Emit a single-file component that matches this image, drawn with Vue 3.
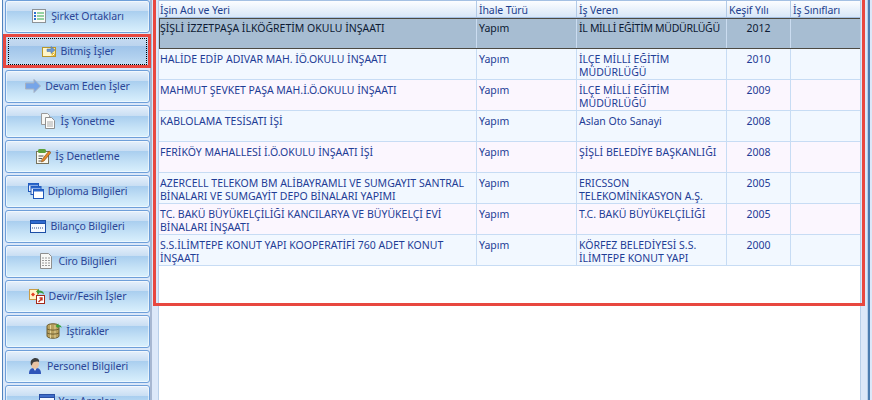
<script setup>
const menu = [
  { key: 'sirket', label: 'Şirket Ortakları' },
  { key: 'bitmis', label: 'Bitmiş İşler', active: true },
  { key: 'devam', label: 'Devam Eden İşler' },
  { key: 'yonetme', label: 'İş Yönetme' },
  { key: 'denetleme', label: 'İş Denetleme' },
  { key: 'diploma', label: 'Diploma Bilgileri' },
  { key: 'bilanco', label: 'Bilanço Bilgileri' },
  { key: 'ciro', label: 'Ciro Bilgileri' },
  { key: 'devir', label: 'Devir/Fesih İşler' },
  { key: 'istirak', label: 'İştirakler' },
  { key: 'personel', label: 'Personel Bilgileri' },
  { key: 'yazi', label: 'Yazı Araçları' },
]
const headers = ['İşin Adı ve Yeri', 'İhale Türü', 'İş Veren', 'Keşif Yılı', 'İş Sınıfları']
const rows = [
  ['ŞİŞLİ İZZETPAŞA İLKÖĞRETİM OKULU İNŞAATI', 'Yapım', 'İL MİLLİ EĞİTİM MÜDÜRLÜĞÜ', '2012'],
  ['HALİDE EDİP ADIVAR MAH. İÖ.OKULU İNŞAATI', 'Yapım', 'İLÇE MİLLİ EĞİTİM\nMÜDÜRLÜĞÜ', '2010'],
  ['MAHMUT ŞEVKET PAŞA MAH.İ.Ö.OKULU İNŞAATI', 'Yapım', 'İLÇE MİLLİ EĞİTİM\nMÜDÜRLÜĞÜ', '2009'],
  ['KABLOLAMA TESİSATI İŞİ', 'Yapım', 'Aslan Oto Sanayi', '2008'],
  ['FERİKÖY MAHALLESİ İ.Ö.OKULU İNŞAATI İŞİ', 'Yapım', 'ŞİŞLİ BELEDİYE BAŞKANLIĞI', '2008'],
  ['AZERCELL TELEKOM BM ALİBAYRAMLI VE SUMGAYIT SANTRAL\nBİNALARI VE SUMGAYİT DEPO BİNALARI YAPIMI', 'Yapım', 'ERICSSON\nTELEKOMİNİKASYON A.Ş.', '2005'],
  ['TC. BAKÜ BÜYÜKELÇİLİĞİ KANCILARYA VE BÜYÜKELÇİ EVİ\nBİNALARI İNŞAATI', 'Yapım', 'T.C. BAKÜ BÜYÜKELÇİLİĞİ', '2005'],
  ['S.S.İLİMTEPE KONUT YAPI KOOPERATİFİ 760 ADET KONUT\nİNŞAATI', 'Yapım', 'KÖRFEZ BELEDİYESİ S.S.\nİLİMTEPE KONUT YAPI', '2000'],
]
</script>

<template>
  <div class="app">
    <aside class="sidebar">
      <div class="menu">
        <button v-for="m in menu" :key="m.key" class="btn" :class="{ active: m.active }">
          <svg class="ico" width="16" height="16" viewBox="0 0 16 16">
            <template v-if="m.key === 'sirket'">
              <rect x="1.500" y="1.500" width="13" height="13" fill="#fbfbf8" stroke="#8d9296" />
              <rect x="3" y="4" width="2" height="2" fill="#2a6fd0" />
              <rect x="3" y="7" width="2" height="2" fill="#2a6fd0" />
              <rect x="3" y="10" width="2" height="2" fill="#2a6fd0" />
              <path d="M6 5h7M6 8h7M6 11h7" stroke="#2fa84a" />
            </template>
            <template v-else-if="m.key === 'bitmis'">
              <rect x="1.500" y="4.500" width="13" height="9" fill="#fbe88e" stroke="#b8962a" />
              <rect x="2" y="5" width="8" height="8" fill="#fff6c8" />
              <path d="M6 6h4V3.500l4 3.500-4 3.500V8.500H6z" fill="#6d96cf" stroke="#50709e" stroke-width=".5" />
              <rect x="11" y="10" width="3" height="3" fill="#e6b93a" />
              <path d="M11.500 12.500l2-2" stroke="#fff" />
            </template>
            <template v-else-if="m.key === 'devam'">
              <path d="M.5 5h8.500V1.500L15.500 8 9 14.500V11H.5z" fill="#76a5e8" stroke="#a8b1bf" />
            </template>
            <template v-else-if="m.key === 'yonetme'">
              <path d="M1.500 .5h6l2 2v9h-8z" fill="#f7f7f5" stroke="#9a9a9a" />
              <path d="M5.500 4.500h6l3 3v8h-9z" fill="#fdfdfb" stroke="#8f8f8f" />
              <path d="M7 9h6M7 11h6M7 13h6" stroke="#aaa" />
            </template>
            <template v-else-if="m.key === 'denetleme'">
              <rect x="1.500" y="3.500" width="12" height="12" fill="#fbfaf0" stroke="#77735e" />
              <rect x="3" y="1" width="8" height="4" rx="1.500" fill="#5da13a" />
              <path d="M3.500 8h5M3.500 10.500h3.500M3.500 13h3" stroke="#555" />
              <path d="M7 11.500L14 3l2 1.500L9 13l-2.500 1z" fill="#e6892a" stroke="#7b4a14" stroke-width=".6" />
            </template>
            <template v-else-if="m.key === 'diploma'">
              <rect x=".5" y=".5" width="10" height="8" fill="#e8f0fc" stroke="#1e56b8" />
              <rect x=".5" y=".5" width="10" height="2" fill="#2a66cb" />
              <rect x="3" y="3.500" width="10" height="8" fill="#eff5ff" stroke="#1e56b8" />
              <rect x="3" y="3.500" width="10" height="2" fill="#2a66cb" />
              <rect x="5.500" y="6.500" width="10" height="9" fill="#fff" stroke="#1e56b8" />
              <rect x="5.500" y="6.500" width="10" height="2" fill="#2a66cb" />
            </template>
            <template v-else-if="m.key === 'bilanco'">
              <rect x=".5" y="2.500" width="15" height="12" fill="#f7faff" stroke="#1d4fa6" />
              <rect x=".5" y="2.500" width="15" height="3" fill="#2f6ad0" stroke="#1d4fa6" />
              <path d="M2 10h12" stroke="#2e4f8e" stroke-dasharray="1 1" />
            </template>
            <template v-else-if="m.key === 'ciro'">
              <path d="M2.500 .5h8l3 3v12h-11z" fill="#f8f8f6" stroke="#8f8f8f" />
              <path d="M4 5h8M4 7.500h8M4 10h8M4 12.500h8" stroke="#9a9a9a" stroke-dasharray="2 1" />
            </template>
            <template v-else-if="m.key === 'devir'">
              <rect x=".5" y="1.500" width="8" height="10" fill="#fff4c9" stroke="#c99b45" />
              <path d="M2 6.500l2-2 2 2-2 2z" fill="#e43c22" />
              <path d="M7 3.500L10 .8V2.500c3 0 5 1.500 5 4-1-1.500-3-1.800-5-1.800v1.800z" fill="#3c9a3a" />
              <rect x="7.500" y="7.500" width="8" height="8" fill="#fff" stroke="#a32a1a" />
              <path d="M9.500 14l3.500-3.500M10.500 10H13v2.500" stroke="#c8331f" stroke-width="1.400" fill="none" />
            </template>
            <template v-else-if="m.key === 'istirak'">
              <path d="M1 3c0-3 12-3 12 0v10c0 3-12 3-12 0z" fill="#b9a15f" stroke="#6f5f32" />
              <path d="M4.500 2v13M9 2v13" stroke="#e3d49a" />
              <path d="M1 6c3 1.500 9 1.500 12 0M1 10c3 1.500 9 1.500 12 0" stroke="#6f5f32" fill="none" />
              <path d="M9.500 3l3-2.500V2c2 0 3 1 3 3-.8-1-1.800-1.200-3-1.200v1.700z" fill="#3ba03b" />
            </template>
            <template v-else-if="m.key === 'personel'">
              <path d="M2 16c0-5 2-6 6-6s6 1 6 6z" fill="#2f55b8" />
              <path d="M6.500 10l1.500 3 1.500-3z" fill="#fff" />
              <ellipse cx="8" cy="6" rx="4" ry="5" fill="#e9c3a2" />
              <path d="M4 7C2.500 2 6 0 8.500 0 12 0 12.500 3 12 4 9 3 6 4 5.500 5.500 5 7 4.500 8 4 7z" fill="#3d3d3d" />
            </template>
            <template v-else>
              <rect x=".5" y="1.500" width="15" height="13" rx="1" fill="#f4f7ff" stroke="#2a4fa3" />
              <rect x=".5" y="1.500" width="15" height="3" fill="#3f6cc9" stroke="#2a4fa3" />
              <path d="M3 8h10M3 11h7" stroke="#2a4fa3" />
            </template>
          </svg>
          <span>{{ m.label }}</span>
        </button>
      </div>
    </aside>

    <main class="panel">
      <div class="frame">
        <div class="grid-row head">
          <div v-for="h in headers" :key="h" class="cell">{{ h }}</div>
        </div>
        <div
          v-for="(r, i) in rows"
          :key="i"
          class="grid-row row"
          :class="{ selected: i === 0, alt: i % 2 === 1 }"
        >
          <div class="cell">{{ r[0] }}</div>
          <div class="cell">{{ r[1] }}</div>
          <div class="cell">{{ r[2] }}</div>
          <div class="cell year">{{ r[3] }}</div>
          <div class="cell"></div>
        </div>
      </div>
      <div class="gutter"></div>
      <div class="edge"></div>
    </main>

    <div class="mark mark-btn"></div>
    <div class="mark mark-grid"></div>
  </div>
</template>

<style>
html, body { margin: 0; background: #fff; }
</style>

<style scoped>
.app {
  position: relative;
  display: flex;
  width: 872px;
  height: 400px;
  overflow: hidden;
  font: 10.5px "Noto Sans", "Liberation Sans", sans-serif;
  background: #fff;
}
.sidebar {
  flex: none;
  box-sizing: border-box;
  width: 152px;
  padding-left: 2px;
  border-right: 2px solid #a7b7d1;
}
.menu {
  display: flex;
  flex-direction: column;
  gap: 2px;
  height: 400px;
  box-sizing: border-box;
  padding: 0 0 0 2px;
  border-left: 1px solid #4f82bd;
  background: #dbe8f9;
  overflow: hidden;
}
.btn {
  position: relative;
  flex: none;
  display: flex;
  align-items: center;
  justify-content: center;
  gap: 4px;
  height: 33px;
  padding: 0 0 2px;
  border: 1px solid #6e9fd9;
  border-radius: 3px;
  color: #2b4697;
  font: inherit;
  letter-spacing: -.1px;
  background: linear-gradient(#e6f0fb 0, #c9def3 32%, #a9ceef 33%, #c4e1f6 68%, #d9f0fd 100%);
  box-shadow: inset 0 0 0 1px rgba(255, 255, 255, .55);
}
.btn.active {
  background: linear-gradient(#c8dcf2 0, #bcd4ee 32%, #9fc4ea 33%, #b2d1ef 70%, #c5dff4 100%);
  box-shadow: none;
}
.btn.active::after {
  content: "";
  position: absolute;
  inset: 2px;
  border: 1px dotted #000;
}
.ico { flex: none; }

.panel {
  flex: 1;
  display: flex;
  padding-left: 6px;
  background: #dce8f9;
}
.frame {
  flex: none;
  width: 703px;
  box-sizing: border-box;
  border-left: 1px solid #b8cfe9;
  border-right: 1px solid #b8cfe9;
  background: #fff;
}
.gutter {
  flex: none;
  width: 6px;
  border-right: 1px solid #b8cfe9;
}
.edge {
  flex: none;
  width: 2px;
  background: #4c7cb0;
}
.grid-row {
  display: grid;
  grid-template-columns: 318px 100px 150px 64px 69px;
  box-sizing: border-box;
}
.cell {
  box-sizing: border-box;
  padding: 4px 2px 0;
  border-right: 1px solid #c7dcf4;
  white-space: pre;
  line-height: 13px;
  overflow: hidden;
}
.cell:last-child { border-right: 0; }
.cell:first-child { padding-left: 1px; }
.head {
  height: 18px;
  border-top: 1px solid #a4c0e3;
  border-bottom: 1px solid #a4c0e3;
  background: linear-gradient(#fcfdff, #d8e7f8);
  color: #1d3f8e;
  letter-spacing: -.1px;
}
.head .cell { padding-top: 3px; border-right-color: #b3cbe8; }
.row {
  height: 31px;
  color: #1f3d96;
  background: #fbf6fe;
  border-bottom: 1px solid #c7dcf4;
}
.row.alt { background: #f2f8ff; }
.row.selected {
  background: #a7bdd2;
  color: #0d1a33;
  border-top: 1px solid #4d4a42;
  border-bottom: 1px solid #4d4a42;
}
.row.selected .cell { padding-top: 3px; border-right-color: #cbdcf0; }
.row.selected .cell:first-child { box-shadow: inset 1px 0 0 #4d4a42; padding-left: 1px; }
.row.selected .cell:nth-child(3) { letter-spacing: -.3px; }
.year { text-align: center; }

.mark {
  position: absolute;
  box-sizing: border-box;
  border: 3px solid #e8473f;
  pointer-events: none;
}
.mark-btn { left: 3px; top: 34px; width: 148px; height: 34px; }
.mark-grid { left: 153px; top: -6px; width: 712px; height: 312px; }
</style>
